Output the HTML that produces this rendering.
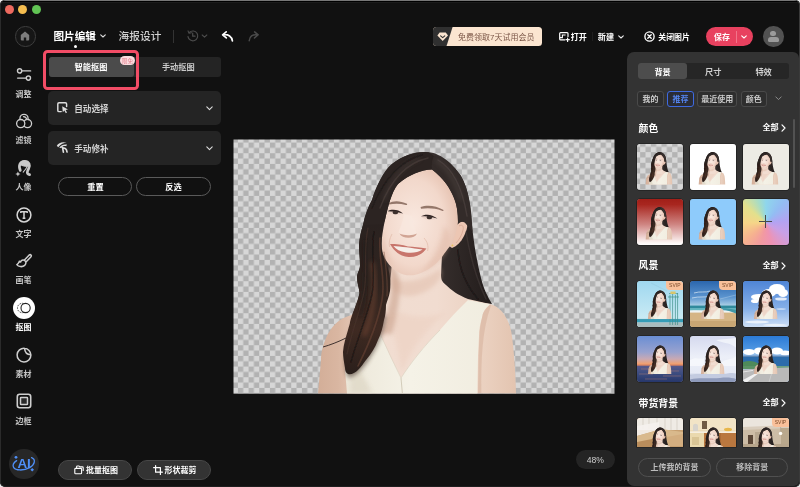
<!DOCTYPE html>
<html lang="zh-CN">
<head>
<meta charset="utf-8">
<title>图片编辑 - 智能抠图</title>
<style>
*{box-sizing:border-box;margin:0;padding:0}
html,body{width:800px;height:487px;overflow:hidden;background:#e9e9e9}
body{font-family:"Liberation Sans","Noto Sans CJK SC",sans-serif;color:#fff;position:relative;-webkit-font-smoothing:antialiased}
.win{position:absolute;left:0;top:0;width:800px;height:487px;background:#111;border-radius:5px;overflow:hidden}
.edge{position:absolute;left:0;top:0;width:800px;height:487px;border-radius:5px;box-shadow:inset 1px 0 #2b2b2b,inset -1px 0 #3a3a3a,inset 0 -1px #1e1e1e;pointer-events:none}
.abs{position:absolute}
.t{position:absolute;white-space:nowrap;line-height:1;transform:translate(-50%,calc(-50% + 0.8px))}
.tl{position:absolute;white-space:nowrap;line-height:1;transform:translate(0,calc(-50% + 0.8px))}
.b{font-weight:700}
.lbl{font-size:8px;color:#c6c6c6;font-weight:700}
svg{position:absolute;overflow:visible}
.panel{position:absolute;left:47px;width:173px;height:34.5px;background:#242424;border-radius:5px}
.pill{position:absolute;border:1px solid #5a5a5a;border-radius:10px;height:19px}
.pill2{position:absolute;border:1px solid #474747;background:#333;border-radius:10px;height:19.5px}
.chip{position:absolute;top:89.5px;height:16px;border:1px solid #4a4a4a;border-radius:3px;background:#2e2e2e}
.th{position:absolute;width:46.3px;height:46.2px;border-radius:3px;overflow:hidden;background:#888;box-shadow:0 0 0 0.6px rgba(0,0,0,.5)}
.th svg{left:0;top:0}
.svip{position:absolute;right:0;top:0;width:17px;height:9px;background:#f9c09a;border-radius:0 3px 0 4px;font-size:5px;color:#7a4a2a;text-align:center;line-height:9px;font-weight:400}
.sec{position:absolute;left:638.6px;font-size:9.9px;font-weight:700;color:#fff;white-space:nowrap;line-height:1;transform:translate(0,-50%)}
.all{position:absolute;left:762.4px;font-size:8.1px;font-weight:700;color:#fff;white-space:nowrap;line-height:1;transform:translate(0,-50%)}
</style>
</head>
<body>
<div class="win">
<!-- all coordinates inside .win are page coords minus 1 -->
<div id="root" class="abs" style="left:0;top:0;width:800px;height:487px;will-change:transform">

<div class="abs" style="left:0;top:0;width:800px;height:1px;background:#777"></div><div class="abs" style="left:0;top:1px;width:800px;height:1px;background:#000"></div><div class="abs" style="left:0;top:2px;width:800px;height:1px;background:#1b1b1b"></div>
<!-- traffic lights -->
<div class="abs" style="left:4.8px;top:4.8px;width:9.2px;height:9.2px;border-radius:50%;background:#ee6a5f"></div>
<div class="abs" style="left:18px;top:4.8px;width:9.2px;height:9.2px;border-radius:50%;background:#f5bd4f"></div>
<div class="abs" style="left:31.5px;top:4.8px;width:9.2px;height:9.2px;border-radius:50%;background:#61c454"></div>

<!-- home -->
<div class="abs" style="left:15.2px;top:26.2px;width:20.4px;height:20.4px;border-radius:50%;border:1px solid #3e3e3e;background:#161616"></div>
<svg style="left:20.4px;top:31.4px" width="10" height="10" viewBox="0 0 10 10"><path d="M5 0.6 L9.2 4 V8.6 Q9.2 9.4 8.4 9.4 H6.2 V6.4 H3.8 V9.4 H1.6 Q0.8 9.4 0.8 8.6 V4 Z" fill="#7d7d7d"/></svg>

<div class="tl b" style="left:53.5px;top:34.8px;font-size:10.6px;color:#fff">图片编辑</div>
<svg style="left:99.5px;top:33.5px" width="6" height="4" viewBox="0 0 6 4"><path d="M0.7 0.8 L3 3 L5.3 0.8" fill="none" stroke="#ddd" stroke-width="1.1" stroke-linecap="round" stroke-linejoin="round"/></svg>
<div class="abs" style="left:73.7px;top:44.6px;width:3.1px;height:3.1px;border-radius:50%;background:#fff"></div>
<div class="tl" style="left:118.6px;top:35.6px;font-size:10.7px;color:#d2d2d2;font-weight:500">海报设计</div>
<div class="abs" style="left:173.2px;top:30px;width:1px;height:13px;background:#333"></div>

<!-- history -->
<svg style="left:186px;top:29px" width="24" height="14" viewBox="186 29 24 14"><path d="M189.4 32.4 A4.9 4.9 0 1 1 188 36.6" fill="none" stroke="#4c4c4c" stroke-width="1.2" stroke-linecap="round"/><path d="M188 30.9 L189 33.2 L191.4 32.7" fill="none" stroke="#4c4c4c" stroke-width="1.1" stroke-linecap="round" stroke-linejoin="round"/><path d="M192.7 33.2 V36.2 H195" fill="none" stroke="#4c4c4c" stroke-width="1.2" stroke-linecap="round" stroke-linejoin="round"/><path d="M202.2 35 L204.5 37.2 L206.8 35" fill="none" stroke="#4c4c4c" stroke-width="1.1" stroke-linecap="round" stroke-linejoin="round"/></svg>
<!-- undo / redo -->
<svg style="left:220px;top:29px" width="16" height="14" viewBox="220 29 16 14"><path d="M226.2 31.9 L222.6 34.8 L226.3 37.9 M223 34.8 C228.6 34 231.8 36.6 232.4 40.8" fill="none" stroke="#fff" stroke-width="1.7" stroke-linecap="round" stroke-linejoin="round"/></svg>
<svg style="left:246px;top:29px" width="16" height="14" viewBox="246 29 16 14"><path d="M254.6 31.9 L258.2 34.8 L254.5 37.9 M257.8 34.8 C252.2 34 249.6 36.6 249.2 40.8" fill="none" stroke="#4a4a4a" stroke-width="1.5" stroke-linecap="round" stroke-linejoin="round"/></svg>

<!-- vip banner -->
<div class="abs" style="left:433px;top:27px;width:109px;height:19.3px;border-radius:3.5px;background:#fbe5d0;overflow:hidden">
  <svg style="left:0;top:0" width="25" height="20" viewBox="0 0 25 20"><path d="M0 0 H19.6 L13.2 20 H0 Z" fill="#303030"/></svg>
</div>
<svg style="left:436.6px;top:31.8px" width="11.4" height="9.4" viewBox="0 0 11.4 9.4"><path d="M2.6 0.4 H8.8 L11 3.4 L5.7 9 L0.4 3.4 Z" fill="#fbe5d0"/><path d="M3.6 3.8 L5.7 5.6 L7.8 3.8" fill="none" stroke="#303030" stroke-width="1.1" stroke-linecap="round" stroke-linejoin="round"/></svg>
<div class="tl" style="left:458px;top:36.7px;font-size:8px;color:#7b5647">免费领取7天试用会员</div>

<!-- open -->
<svg style="left:558.8px;top:32px" width="11" height="10" viewBox="0 0 11 10"><path d="M9 4.6 V1.6 Q9 0.7 8.1 0.7 H1.6 Q0.7 0.7 0.7 1.6 V7 Q0.7 7.9 1.6 7.9 H5.6" fill="none" stroke="#fff" stroke-width="1.2" stroke-linecap="round"/><path d="M0.9 5.6 H3.4 V3 H6.6" fill="none" stroke="#fff" stroke-width="1.1"/><path d="M8.6 6 V9.4 M6.9 7.7 H10.3" stroke="#fff" stroke-width="1.2" stroke-linecap="round"/></svg>
<div class="tl b" style="left:570.8px;top:36.8px;font-size:8px">打开</div>
<div class="abs" style="left:592px;top:32px;width:1px;height:9px;background:#1f1f1f"></div>
<div class="tl b" style="left:597.8px;top:36.8px;font-size:8.1px">新建</div>
<svg style="left:617.6px;top:35px" width="6" height="4" viewBox="0 0 6 4"><path d="M0.7 0.8 L3 3 L5.3 0.8" fill="none" stroke="#eee" stroke-width="1.1" stroke-linecap="round" stroke-linejoin="round"/></svg>

<!-- close image -->
<svg style="left:644.2px;top:31.2px" width="11" height="11" viewBox="0 0 11 11"><circle cx="5.5" cy="5.5" r="4.6" fill="none" stroke="#fff" stroke-width="1.35"/><path d="M3.8 3.8 L7.2 7.2 M7.2 3.8 L3.8 7.2" stroke="#fff" stroke-width="1.35" stroke-linecap="round"/></svg>
<div class="tl b" style="left:658.3px;top:36.8px;font-size:7.9px">关闭图片</div>

<!-- save -->
<div class="abs" style="left:705.5px;top:27.2px;width:47.5px;height:19px;border-radius:9.5px;background:#e8415f"></div>
<div class="tl b" style="left:714px;top:36.8px;font-size:7.9px">保存</div>
<div class="abs" style="left:736.3px;top:31px;width:1px;height:11.5px;background:#f58a9c;opacity:.7"></div>
<svg style="left:740.6px;top:35px" width="6" height="4" viewBox="0 0 6 4"><path d="M0.7 0.8 L3 3 L5.3 0.8" fill="none" stroke="#fff" stroke-width="1.1" stroke-linecap="round" stroke-linejoin="round"/></svg>

<!-- avatar -->
<div class="abs" style="left:763.2px;top:26.4px;width:20.4px;height:20.4px;border-radius:50%;background:#525252;overflow:hidden">
  <div class="abs" style="left:7.3px;top:4.2px;width:5.8px;height:5.8px;border-radius:50%;background:#9a9a9a"></div>
  <div class="abs" style="left:4.4px;top:11px;width:11.6px;height:5px;border-radius:3px 3px 1.5px 1.5px;background:#9a9a9a"></div>
</div>

<!-- adjust -->
<svg style="left:16px;top:67px" width="17" height="15" viewBox="0 0 17 15"><circle cx="3.6" cy="3.9" r="2.1" fill="none" stroke="#cfcfcf" stroke-width="1.4"/><path d="M6 3.9 H14.6" stroke="#cfcfcf" stroke-width="1.4" stroke-linecap="round"/><circle cx="12.4" cy="11.1" r="2.1" fill="none" stroke="#cfcfcf" stroke-width="1.4"/><path d="M1.6 11.1 H10" stroke="#cfcfcf" stroke-width="1.4" stroke-linecap="round"/></svg>
<div class="t lbl" style="left:23.6px;top:93.5px">调整</div>
<!-- filter -->
<svg style="left:14px;top:112px" width="20" height="18" viewBox="14 112 20 18"><circle cx="24" cy="118.4" r="4.1" fill="none" stroke="#cfcfcf" stroke-width="1.3"/><circle cx="27.5" cy="123.6" r="4.1" fill="#111" stroke="#cfcfcf" stroke-width="1.3"/><path d="M26.2 119.6 C27.6 120.6 28.4 122 28.6 123.6" fill="none" stroke="#111" stroke-width="1.2"/><circle cx="20.7" cy="123.6" r="4.1" fill="#111" stroke="#cfcfcf" stroke-width="1.3"/><path d="M23.4 116.6 C25.4 116.8 26.6 118 26.8 119.8" fill="none" stroke="#cfcfcf" stroke-width="1.1" stroke-linecap="round"/></svg>
<div class="t lbl" style="left:23.6px;top:140.3px">滤镜</div>
<!-- portrait -->
<svg style="left:14px;top:158px" width="20" height="20" viewBox="14 158 20 20"><path d="M20.3 170.4 C18.2 165.6 20 161.3 24.6 161.3 C29.2 161.3 30.6 165.6 28.6 168.8 C27 171.4 26.4 174.2 29.6 174.7" fill="none" stroke="#c9c9c9" stroke-width="2.7" stroke-linecap="round" stroke-linejoin="round"/><path d="M20.4 164.6 C22.6 166 25.4 166.4 27.6 166 C26.4 168.2 24.8 170.4 23.2 172.2" fill="none" stroke="#c9c9c9" stroke-width="1.1" stroke-linecap="round" stroke-linejoin="round"/><path d="M19.4 166 C19 162 21.6 160.4 24.6 160.4 C28 160.4 30.4 162.6 29.8 166.6 L27.6 166.2 C25 166.6 22.4 166 20.6 164.8 Z" fill="#c9c9c9"/><path d="M17.9 171.4 L18.7 173.2 L20.5 174 L18.7 174.8 L17.9 176.6 L17.1 174.8 L15.3 174 L17.1 173.2 Z" fill="#c9c9c9"/></svg>
<div class="t lbl" style="left:23.6px;top:187.3px">人像</div>
<!-- text -->
<svg style="left:16px;top:206.5px" width="16" height="16" viewBox="0 0 16 16"><circle cx="8" cy="8" r="6.9" fill="none" stroke="#d6d6d6" stroke-width="1.5"/><path d="M4.8 6 V4.8 H11.2 V6 M8 4.8 V11.2 M6.6 11.3 H9.4" fill="none" stroke="#d6d6d6" stroke-width="1.5" stroke-linejoin="round"/></svg>
<div class="t lbl" style="left:23.6px;top:233.7px">文字</div>
<!-- brush -->
<svg style="left:16px;top:252.5px" width="16" height="16" viewBox="0 0 16 16"><path d="M8.2 7.2 L13 2.2 Q14.2 1.2 15 2 Q15.8 2.9 14.8 4 L10 9" fill="none" stroke="#cfcfcf" stroke-width="1.5" stroke-linejoin="round"/><path d="M3.4 8.2 C2.6 10 1.8 11.2 0.8 11.6 C2.4 13.8 6.4 14.4 8.6 12.4 C10.2 10.8 10.2 9 9.2 8 C8 6.8 6.2 6.8 5 8 C5 9.2 4.2 9.4 3.4 8.2 Z" fill="none" stroke="#cfcfcf" stroke-width="1.5" stroke-linejoin="round"/></svg>
<div class="t lbl" style="left:23.6px;top:280.4px">画笔</div>
<!-- cutout (active) -->
<div class="abs" style="left:12.6px;top:296.6px;width:22.8px;height:22.8px;border-radius:50%;background:#fff"></div>
<svg style="left:15px;top:299px" width="18" height="18" viewBox="0 0 18 18"><circle cx="7.2" cy="9" r="4.7" fill="none" stroke="#333" stroke-width="0.9" stroke-dasharray="1.6 1.1"/><circle cx="10.6" cy="9" r="4.6" fill="#fff" stroke="#222" stroke-width="1.1"/></svg>
<div class="t b" style="left:23.6px;top:327.4px;font-size:8px;color:#fff">抠图</div>
<!-- sticker -->
<svg style="left:16px;top:346.6px" width="16" height="16" viewBox="0 0 16 16"><path d="M8.6 1.2 A6.9 6.9 0 1 0 14.9 8 C14.9 4.8 12 1.4 8.6 1.2 Z" fill="none" stroke="#cfcfcf" stroke-width="1.5" stroke-linejoin="round"/><path d="M8.6 1.4 C8.8 4.8 11 7.6 14.8 7.8" fill="none" stroke="#cfcfcf" stroke-width="1.5"/></svg>
<div class="t lbl" style="left:23.6px;top:373.9px">素材</div>
<!-- frame -->
<svg style="left:16px;top:393.4px" width="16" height="16" viewBox="0 0 16 16"><rect x="1.3" y="1.3" width="13.4" height="13.4" rx="2.4" fill="none" stroke="#cfcfcf" stroke-width="1.6"/><rect x="4.5" y="4.5" width="7" height="7" rx="0.6" fill="#2a2a2a" stroke="#cfcfcf" stroke-width="1.5"/></svg>
<div class="t lbl" style="left:23.6px;top:420.5px">边框</div>
<!-- AI -->
<div class="abs" style="left:9.3px;top:449.2px;width:29.4px;height:29.4px;border-radius:50%;background:#272727"></div>
<svg style="left:9px;top:449px" width="30" height="30" viewBox="9 449 30 30"><text x="17.4" y="467.6" font-family="Liberation Sans, sans-serif" font-size="13.6" fill="#4f8ff7" font-weight="700" textLength="13.4" lengthAdjust="spacingAndGlyphs">AI</text><path d="M31.6 457.6 C36 459.4 35 464.6 29.6 467.6 C23.6 471 15.4 470.6 13.6 467.4 C12.4 465.2 14 462.4 16.6 460.6" fill="none" stroke="#4f8ff7" stroke-width="1.3" stroke-linecap="round"/><circle cx="16" cy="457.3" r="1.4" fill="#4f8ff7"/><path d="M32.2 468 L34 469.8 L32.2 471.6 L30.4 469.8 Z" fill="#4f8ff7"/></svg>

<!-- tabs -->
<div class="abs" style="left:48.5px;top:56.5px;width:172.7px;height:20px;border-radius:3px;background:#242424"></div>
<div class="abs" style="left:48.5px;top:56.5px;width:85.5px;height:20px;border-radius:3px;background:#4b4b4b"></div>
<div class="t b" style="left:91px;top:67px;font-size:8.2px">智能抠图</div>
<div class="t" style="left:178.3px;top:67px;font-size:8.2px;color:#c8c8c8;font-weight:700">手动抠图</div>
<div class="abs" style="left:119.9px;top:56.1px;width:15px;height:9.2px;border-radius:4.6px;background:#fbdcdf"></div>
<div class="t" style="left:127.4px;top:60.6px;font-size:5.6px;color:#e27f8c;font-weight:400">限免</div>
<!-- highlight -->
<div class="abs" style="left:42.6px;top:49.7px;width:96.5px;height:40.1px;border:3px solid #f24d66;border-radius:4.5px"></div>

<!-- panel 1 -->
<div class="panel" style="left:48px;top:90.7px"></div>
<svg style="left:56.6px;top:102.2px" width="12" height="12" viewBox="0 0 12 12"><path d="M9.6 4.4 V2 Q9.6 0.8 8.4 0.8 H2 Q0.8 0.8 0.8 2 V8.4 Q0.8 9.6 2 9.6 H4.2" fill="none" stroke="#ddd" stroke-width="1.45" stroke-linecap="round"/><path d="M5.2 4.2 L11 7.4 L8.6 8 L10 10.6 L8.8 11.2 L7.4 8.6 L5.8 10.2 Z" fill="#ddd"/></svg>
<div class="tl" style="left:74.2px;top:108.3px;font-size:8.6px;color:#d2d2d2;font-weight:700">自动选择</div>
<svg style="left:206.2px;top:106.2px" width="7" height="5" viewBox="0 0 7 5"><path d="M0.8 0.9 L3.5 3.6 L6.2 0.9" fill="none" stroke="#ddd" stroke-width="1.1" stroke-linecap="round" stroke-linejoin="round"/></svg>
<!-- panel 2 -->
<div class="panel" style="left:48px;top:130.8px"></div>
<svg style="left:55.6px;top:141.2px" width="13" height="12" viewBox="0 0 13 12"><path d="M0.8 4.8 C2.6 1.6 6.6 0.4 10.6 1.8 C8 2 4.4 3 2.2 6.2 Z" fill="#ddd"/><path d="M3.2 6.8 C5.4 3.6 8.4 3 11 3.6 L10.2 5.2 C8.2 4.8 6.4 5.4 5.4 7 Z" fill="#ddd"/><path d="M6.6 6.6 L7.4 11.2 M6.8 7.4 C8.6 6.6 10.6 7.8 11 11" fill="none" stroke="#ddd" stroke-width="1.7" stroke-linecap="round"/></svg>
<div class="tl" style="left:74.2px;top:147.8px;font-size:8.6px;color:#d2d2d2;font-weight:700">手动修补</div>
<svg style="left:206.2px;top:146px" width="7" height="5" viewBox="0 0 7 5"><path d="M0.8 0.9 L3.5 3.6 L6.2 0.9" fill="none" stroke="#ddd" stroke-width="1.1" stroke-linecap="round" stroke-linejoin="round"/></svg>

<!-- buttons -->
<div class="pill" style="left:58.2px;top:177.2px;width:74.3px"></div>
<div class="t b" style="left:95.4px;top:187px;font-size:8.2px">重置</div>
<div class="pill" style="left:136.2px;top:177.2px;width:74.5px"></div>
<div class="t b" style="left:173.5px;top:187px;font-size:8.2px">反选</div>

<svg width="0" height="0" style="left:0;top:0">
<defs>
  <pattern id="chk" x="237.9" y="142.56" width="10.667" height="10.667" patternUnits="userSpaceOnUse">
    <rect width="10.667" height="10.667" fill="#d7d7d7"/>
    <rect width="5.333" height="5.333" fill="#b2b2b2"/>
    <rect x="5.333" y="5.333" width="5.334" height="5.334" fill="#b2b2b2"/>
  </pattern>
  <linearGradient id="gHairF" x1="0" y1="0" x2="0" y2="1">
    <stop offset="0" stop-color="#2a2220"/><stop offset="0.4" stop-color="#30241f"/><stop offset="0.7" stop-color="#3f2a22"/><stop offset="1" stop-color="#2a1f1b"/>
  </linearGradient>
  <linearGradient id="gHairB" x1="0" y1="0" x2="1" y2="0">
    <stop offset="0" stop-color="#2d2523"/><stop offset="0.55" stop-color="#3a3230"/><stop offset="1" stop-color="#221c1b"/>
  </linearGradient>
  <radialGradient id="gFace" cx="0.42" cy="0.5" r="0.62">
    <stop offset="0" stop-color="#f9e8df"/><stop offset="0.65" stop-color="#f2d8cb"/><stop offset="1" stop-color="#e4bfad"/>
  </radialGradient>
  <linearGradient id="gBody" x1="0" y1="0" x2="1" y2="0">
    <stop offset="0" stop-color="#d3ae98"/><stop offset="0.1" stop-color="#d9b6a1"/><stop offset="0.2" stop-color="#e6c9b8"/><stop offset="0.32" stop-color="#f1ddd1"/><stop offset="0.6" stop-color="#f1dcd0"/><stop offset="0.85" stop-color="#ead0bf"/><stop offset="1" stop-color="#e3c4b0"/>
  </linearGradient>
  <linearGradient id="gDress" x1="0" y1="0" x2="1" y2="0">
    <stop offset="0" stop-color="#ece7d9"/><stop offset="0.45" stop-color="#f5f2e7"/><stop offset="1" stop-color="#f1ede0"/>
  </linearGradient>
  <filter id="bl1" x="-20%" y="-20%" width="140%" height="140%"><feGaussianBlur stdDeviation="0.6"/></filter>
  <filter id="bl2" x="-30%" y="-30%" width="160%" height="160%"><feGaussianBlur stdDeviation="2.2"/></filter>
  <!-- person drawn in page coordinates; canvas origin = (233.5,139.5) -->
  <g id="person" transform="translate(-233.5,-139.5)">
    <!-- back hair -->
    <path d="M424 152 C438 151 452 162 461 176 C469 190 471 208 472 225 C474 245 477 262 481 278 C484 290 488 297 492 304 L468 301 L440 292 L400 292 L372 300 L350 322 C352 314 358 302 359.5 293 C359 287 357 283 357 277 C357.5 272 360 270 360 265 C360 258 359 252 359 245 C359.5 238 361 231 363 225 C365 215 368 207 372 200 C374 192 377 186 380 180 C383 174 387 168 392 164 C397 160 402 157 408 155 C413 153 419 152 424 152 Z" fill="url(#gHairB)"/>
    <!-- body skin -->
    <path d="M392 262 L390 285 C380 300 362 312 346 317 C338 320 331 327 326 338 C322 348 321 354 321 360 L318 393.5 H516 L515.4 378 C515 366 514 355 513 345 C512 335 511 327 507.5 320.5 C505 315 502 311 499 309 C496 306 493 305 490 304 L468 299 C458 295 451 290 446 285 C442 282 441 279 441 275 L442 255 Z" fill="url(#gBody)"/>
    <!-- chest / neck shading -->
    <path d="M390 276 C398 284 420 284 441 268 L441 276 C436 288 420 296 408 296 C398 296 392 290 390 284 Z" fill="#e0bca9" opacity="0.5" filter="url(#bl2)"/>
    <path d="M384 318 C392 322 396 340 402 372 C410 350 424 332 446 312 C430 318 412 318 400 312 Z" fill="#ebcdbd" opacity="0.45" filter="url(#bl2)"/>
    <path d="M389 268 C392 282 392 296 388 308 C386 316 384 324 380 334 L392 334 C396 318 400 300 400 284 C399 276 396 270 392 266 Z" fill="#caa28d" opacity="0.6" filter="url(#bl2)"/>
    <!-- dress -->
    <path d="M468 300 L490 304.3 C485 309 483 312 482.4 316 C480 324 479 330 479 336 L478 356 L477.4 393.5 H347 L345 370 L348 340 L356 314 L364 311 L380 334 C384 342 387 349 390 356 C394 364 398 371 401 378 C407 369 413 360 420 352 C426 344 433 337 440 330 C446 323 452 316 458 310 Z" fill="url(#gDress)"/>
    <path d="M401 378 L402.4 393.5" stroke="#cfc7b4" stroke-width="0.9" fill="none"/>
    <path d="M380 334 C386 346 394 364 401 378 C410 364 424 346 440 330" stroke="#d8cfbd" stroke-width="0.7" fill="none" opacity="0.8"/>
    <path d="M352 352 C360 372 368 384 372 393 L350 393 Z" fill="#ddd6c4" opacity="0.7" filter="url(#bl2)"/>
    <!-- right shoulder shade -->
    <path d="M490 304.5 C485 309 483 313 482.4 316 C480.5 324 479.5 330 479.4 336 L478.6 356 L478 393 L481.4 393 C481 360 482 330 491 305.4 Z" fill="#d6b19c" opacity="0.55" filter="url(#bl1)"/>
    <!-- ear -->
    <path d="M455 228 C458 222 463 220 466 222 C468.5 224 467 230 464 236 C461 242 457 246 452 248 L449 246 Z" fill="#ecc6b3"/>
    <path d="M459 226 C462 224 464 226 463 230 C462 235 459 240 456 243" stroke="#cf9f8b" stroke-width="0.8" fill="none" opacity="0.8"/>
    <circle cx="452.4" cy="245.4" r="0.9" fill="#e6c65a"/>
    <!-- face -->
    <path d="M432 169.5 C421 170 410 174 398 184 C391 193 388 207 385 220 C382.5 232 380.5 243 382.5 252 C385 261 391 268 398 272 C404 276 413 276.5 421 273 C431 269 439 262 444 254 C447 250 449 247 451 245 C455 238 457 230 458 222 C458 213 457 205 454 198 C450 188 444 179 432 169.5 Z" fill="url(#gFace)"/>
    <!-- cheek / jaw shading -->
    <path d="M444 226 C452 232 452 246 442 258 C436 266 428 270 420 273 C432 262 440 246 444 226 Z" fill="#dcb09c" opacity="0.35" filter="url(#bl2)"/>
    <path d="M384 226 C383 240 385 254 394 266 C388 262 384 257 382.5 251 C381 244 382.5 234 384 226 Z" fill="#dcb09c" opacity="0.4" filter="url(#bl2)"/>
    <!-- brows -->
    <path d="M388.6 203.4 C393 200.4 400 200.4 407 203.8 C407.4 204.6 407 205.2 406 205 C400 203.4 394 203.4 389 204.6 Z" fill="#7d5e51" opacity="0.8" filter="url(#bl1)"/>
    <path d="M420.6 207 C427 204.6 436 205.4 443.6 210 C443.6 211 443 211.2 442 210.8 C435 208.2 428 207.8 421 208.8 Z" fill="#7d5e51" opacity="0.8" filter="url(#bl1)"/>
    <!-- eyes -->
    <path d="M387.6 211.4 C391 208.6 398 208.8 403 213.4 C398 215.6 391 215 387.6 211.4 Z" fill="#e9d2c8" opacity="0.9"/>
    <path d="M421 216.4 C425 213 432 213.6 437.4 218.6 C431 221 425 220 421 216.4 Z" fill="#e9d2c8" opacity="0.9"/>
    <path d="M387.6 211.2 C391.6 209 398 209.4 403 213.4 C397.6 211.8 392 211.4 387.6 211.2 Z" fill="#2e2220" filter="url(#bl1)"/>
    <path d="M421 216.2 C425.6 213.6 432 214.2 437.4 218.6 C431.6 216.8 426 216.2 421 216.2 Z" fill="#2e2220" filter="url(#bl1)"/>
    <ellipse cx="395.4" cy="212.4" rx="2.7" ry="1.9" fill="#3d302d"/>
    <ellipse cx="429.4" cy="217.4" rx="2.7" ry="1.9" fill="#3d302d"/>
    <!-- nose -->
    <path d="M404 214 C403 222 400 228 398.6 232 C400 236 404 237.6 408 237.8 C412 238 416 236.6 417 233.4 C415 229 413 224 412 216 Z" fill="#f9e9e0" opacity="0.7" filter="url(#bl1)"/>
    <path d="M399.4 233.6 C401 236.6 404.4 237.6 408 237.8 C412 238 415.6 236.8 417 233.6 C414 235 411 235.4 408 235.2 C405 235.2 402 234.8 399.4 233.6 Z" fill="#c48f7c" opacity="0.75" filter="url(#bl1)"/>
    <!-- smile folds -->
    <path d="M392 234 C389.4 239 388.6 243 389.6 247" stroke="#dbb09d" stroke-width="0.9" fill="none" opacity="0.6" filter="url(#bl1)"/>
    <path d="M424 238 C427.6 242 428.6 246 427.6 251" stroke="#dbb09d" stroke-width="0.9" fill="none" opacity="0.6" filter="url(#bl1)"/>
    <!-- mouth -->
    <path d="M390 244 C396 244 402 244.6 408 246.6 C414 246.8 420 247.4 426.4 248.6 C423 254 416 257.4 408.6 257 C400 256.4 394 251 390 244 Z" fill="#c8766c" filter="url(#bl1)"/>
    <path d="M393.4 246 C400 246.4 412 248 422.6 249.6 C418 252.6 412 253.2 406 252.4 C400 251.6 396 249.4 393.4 246 Z" fill="#f6efe9"/>
    <!-- front hair: top cap over forehead edges -->
    <path d="M432 169.5 C421 170 410 174 398 184 C391 193 388 207 385 220 L383 225 L363 225 C365 215 368 207 372 200 C376 188 383 172 392 164 C402 156 414 152 424 152 C428 152 431 153.5 434 156 C432 160 431.5 165 432 169.5 Z" fill="#2c2422"/>
    <path d="M434 156 C442 157 452 163 461 176 C469 190 471 208 472 225 L472.6 232 L466 224 C464 221 460 221 458 224 C458 213 457 205 454 198 C450 188 444 179 432 169.5 C431.5 165 432 160 434 156 Z" fill="#332b29"/>
    <path d="M436 160 C446 166 456 180 461 200" stroke="#574d4a" stroke-width="3" fill="none" opacity="0.5" filter="url(#bl2)"/>
    <path d="M420 158 C406 162 392 176 384 200" stroke="#4c403c" stroke-width="3" fill="none" opacity="0.55" filter="url(#bl2)"/>
    <path d="M360 300 C356 316 350 330 347 346 C344 360 344 372 349 378 C356 376 364 368 370 358 C378 346 384 332 386 316 Z" fill="#3a2a24" opacity="0.55" filter="url(#bl2)"/>
    <!-- front left hair flowing down -->
    <path d="M363 225 L383.4 224 C382 232 380.6 243 382 251 C383 257 385.4 262 388 268 C390 275 391 283 390 291 C389 297 387 301 386 305 C386 311 385.4 316 384 320 C382.6 328 381 334 378 340 C375 348 371 354 366 360 C363 364 361 367 358 370 C355 373 351 375 348 374 C346 373 345 371 345 368 C344 362 343 357 343 352 C343.5 344 346 337 348 330 C349 326 350 324 350 322 C352 314 358 302 359.5 293 C359 287 357 283 357 277 C357.5 272 360 270 360 265 C360 258 359 252 359 245 C359.5 238 361 231 363 225 Z" fill="url(#gHairF)"/>
    <path d="M372 262 C376 282 376 306 364 336" stroke="#7a4a36" stroke-width="4" fill="none" opacity="0.55" filter="url(#bl2)"/>
    <path d="M366 240 C364 262 368 286 360 316" stroke="#1f1816" stroke-width="3" fill="none" opacity="0.6" filter="url(#bl2)"/>
    <!-- hair strands -->
    <g fill="none" stroke-linecap="round" filter="url(#bl1)">
      <path d="M380 238 C378 258 386 278 382 300 C378 322 370 342 358 366" stroke="#6d4635" stroke-width="1.6" opacity="0.55"/>
      <path d="M374 232 C370 252 376 274 372 294 C368 314 358 336 351 362" stroke="#171110" stroke-width="1.4" opacity="0.6"/>
      <path d="M368 228 C363 250 368 272 364 292 C360 312 352 330 347 354" stroke="#4a342c" stroke-width="1.2" opacity="0.6"/>
      <path d="M384 252 C386 266 388 280 387 296" stroke="#7a5240" stroke-width="1.2" opacity="0.5"/>
      <path d="M428 158 C410 162 392 176 380 208" stroke="#514440" stroke-width="1.4" opacity="0.55"/>
      <path d="M422 155 C402 160 384 178 372 208" stroke="#1c1514" stroke-width="1.4" opacity="0.55"/>
      <path d="M438 160 C452 168 462 186 467 216" stroke="#554a47" stroke-width="1.4" opacity="0.5"/>
      <path d="M466 232 C470 256 475 276 486 299" stroke="#4a403d" stroke-width="1.4" opacity="0.5"/>
      <path d="M458 250 C459 268 465 284 478 299" stroke="#151010" stroke-width="1.6" opacity="0.55"/>
    </g>
    <!-- stray hair -->
    <path d="M346 338 C338 342 330 345 323 347" stroke="#2c2321" stroke-width="0.9" fill="none"/>
  </g>
</defs>
</svg>
<!-- main canvas -->
<svg style="left:233px;top:139px;overflow:hidden" width="383" height="256" viewBox="233 139 383 256">
  <defs><clipPath id="cvclip"><rect x="233.5" y="139.5" width="381" height="254.2"/></clipPath></defs>
  <rect x="233.5" y="139.5" width="381" height="254.2" fill="url(#chk)"/>
  <g clip-path="url(#cvclip)"><use href="#person" transform="translate(233.5,139.5)"/></g>
</svg>

<div class="abs" style="left:626.6px;top:52px;width:172.4px;height:434px;background:#333;border-radius:7px 6px 5px 7px"></div>
<div class="abs" style="left:637.5px;top:63.2px;width:151.3px;height:16px;border-radius:3px;background:#262626"></div>
<div class="abs" style="left:637.5px;top:63.2px;width:49.6px;height:16px;border-radius:3px;background:#4d4d4d"></div>
<div class="t b" style="left:662.6px;top:71.5px;font-size:8.2px">背景</div>
<div class="t" style="left:713.2px;top:71.5px;font-size:8.2px;color:#d0d0d0;font-weight:700">尺寸</div>
<div class="t" style="left:763.6px;top:71.5px;font-size:8.2px;color:#d0d0d0;font-weight:700">特效</div>
<div class="chip" style="left:637.2px;top:90.5px;width:26.4px"></div>
<div class="t" style="left:650.4000000000001px;top:98.8px;font-size:8px;color:#cacaca;font-weight:700">我的</div>
<div class="chip" style="left:667px;top:90.5px;width:27px;border-color:#3e6ae1;background:#2a2c36"></div>
<div class="t" style="left:680.5px;top:98.8px;font-size:8px;color:#5585f0;font-weight:700">推荐</div>
<div class="chip" style="left:697px;top:90.5px;width:40.4px"></div>
<div class="t" style="left:717.2px;top:98.8px;font-size:8px;color:#cacaca;font-weight:700">最近使用</div>
<div class="chip" style="left:740.5px;top:90.5px;width:26.6px"></div>
<div class="t" style="left:753.8px;top:98.8px;font-size:8px;color:#cacaca;font-weight:700">颜色</div>
<svg style="left:774.6px;top:96.4px" width="7" height="5" viewBox="0 0 7 5"><path d="M0.8 0.9 L3.5 3.6 L6.2 0.9" fill="none" stroke="#8a8a8a" stroke-width="1" stroke-linecap="round" stroke-linejoin="round"/></svg>
<div class="abs" style="left:792.8px;top:119px;width:2.4px;height:69px;border-radius:1.2px;background:#525252"></div>
<div class="sec" style="top:128.5px">颜色</div>
<div class="all" style="top:128.29999999999998px">全部</div>
<svg style="left:780.6px;top:124.0px" width="5" height="8" viewBox="0 0 5 8"><path d="M1 0.9 L4 4 L1 7.1" fill="none" stroke="#fff" stroke-width="1.2" stroke-linecap="round" stroke-linejoin="round"/></svg>
<div class="sec" style="top:266.09999999999997px">风景</div>
<div class="all" style="top:265.9px">全部</div>
<svg style="left:780.6px;top:261.59999999999997px" width="5" height="8" viewBox="0 0 5 8"><path d="M1 0.9 L4 4 L1 7.1" fill="none" stroke="#fff" stroke-width="1.2" stroke-linecap="round" stroke-linejoin="round"/></svg>
<div class="sec" style="top:403.59999999999997px">带货背景</div>
<div class="all" style="top:403.4px">全部</div>
<svg style="left:780.6px;top:399.09999999999997px" width="5" height="8" viewBox="0 0 5 8"><path d="M1 0.9 L4 4 L1 7.1" fill="none" stroke="#fff" stroke-width="1.2" stroke-linecap="round" stroke-linejoin="round"/></svg>
<div class="th" style="left:637.0px;top:143.6px;height:46.2px;"><svg width="46.3" height="46.2" viewBox="0 0 46.3 46.2"><defs><pattern id="chk2" x="3.15" y="-2.53" width="10.667" height="10.667" patternUnits="userSpaceOnUse"><rect width="10.667" height="10.667" fill="#d7d7d7"/><rect width="5.333" height="5.333" fill="#b4b4b4"/><rect x="5.333" y="5.333" width="5.334" height="5.334" fill="#b4b4b4"/></pattern></defs><rect width="46.3" height="46.2" fill="url(#chk2)"/><use href="#person" transform="translate(-2.65,6.4) scale(0.134)"/></svg></div>
<div class="th" style="left:689.9px;top:143.6px;height:46.2px;"><svg width="46.3" height="46.2" viewBox="0 0 46.3 46.2"><rect width="46.3" height="46.2" fill="#fff"/><use href="#person" transform="translate(-2.65,6.4) scale(0.134)"/></svg></div>
<div class="th" style="left:742.7px;top:143.6px;height:46.2px;"><svg width="46.3" height="46.2" viewBox="0 0 46.3 46.2"><rect width="46.3" height="46.2" fill="#edebe4"/><use href="#person" transform="translate(-2.65,6.4) scale(0.134)"/></svg></div>
<div class="th" style="left:637.0px;top:198.7px;height:46.2px;"><svg width="46.3" height="46.2" viewBox="0 0 46.3 46.2"><defs><linearGradient id="gRed" x1="0" y1="0" x2="0" y2="1"><stop offset="0" stop-color="#a11f18"/><stop offset="0.12" stop-color="#a8261f"/><stop offset="0.55" stop-color="#cf8582"/><stop offset="0.95" stop-color="#fdf7f6"/><stop offset="1" stop-color="#fff"/></linearGradient></defs><rect width="46.3" height="46.2" fill="url(#gRed)"/><use href="#person" transform="translate(-2.65,6.4) scale(0.134)"/></svg></div>
<div class="th" style="left:689.9px;top:198.7px;height:46.2px;"><svg width="46.3" height="46.2" viewBox="0 0 46.3 46.2"><rect width="46.3" height="46.2" fill="#8ecbfb"/><use href="#person" transform="translate(-2.65,6.4) scale(0.134)"/></svg></div>
<div class="th" style="left:742.7px;top:198.7px;background:conic-gradient(from 0deg at 50% 52%,#8fd6ec 0deg,#93bdf3 40deg,#b3a3f2 85deg,#c9a0e6 120deg,#ee93b3 165deg,#f29aa0 195deg,#f6b38f 230deg,#f6d588 270deg,#e3e08c 310deg,#a9dcc4 340deg,#8fd6ec 360deg)"><div style="position:absolute;left:16.4px;top:22.6px;width:13.4px;height:1.1px;background:#4a4a4a"></div><div style="position:absolute;left:22.6px;top:16.4px;width:1.1px;height:13.4px;background:#4a4a4a"></div></div>
<div class="th" style="left:637.0px;top:280.8px;height:46.2px;"><svg width="46.3" height="46.2" viewBox="0 0 46.3 46.2"><defs><linearGradient id="l1" x1="0" y1="0" x2="0" y2="1"><stop offset="0" stop-color="#9fd8ef"/><stop offset="0.8" stop-color="#c9eaf4"/></linearGradient></defs>
<rect width="46.3" height="46.2" fill="url(#l1)"/>
<rect y="38.2" width="46.3" height="3.4" fill="#3aa7c2"/><rect y="41.4" width="46.3" height="5" fill="#a9bdbf"/>
<path d="M0 38.4 H46.3 M0 40 H46.3" stroke="#2a7f98" stroke-width="0.5"/>
<path d="M33 14 V44 M35.6 12 V44 M38.4 14 V44 M40.6 12 V44 M31 16 H42 M32 12.6 H41" stroke="#3f8f86" stroke-width="0.7" fill="none"/><path d="M33.4 10.6 H38.6 V13 H33.4 Z" fill="#d9c56a"/>
<path d="M14 2 L30 10" stroke="#8ec4d8" stroke-width="0.4"/><use href="#person" transform="translate(1.0,8.1) scale(0.118)"/></svg><div class="svip">SVIP</div></div>
<div class="th" style="left:689.9px;top:280.8px;height:46.2px;"><svg width="46.3" height="46.2" viewBox="0 0 46.3 46.2"><defs><linearGradient id="l2" x1="0" y1="0" x2="0" y2="1"><stop offset="0" stop-color="#2b66ad"/><stop offset="0.35" stop-color="#5b94cf"/><stop offset="0.52" stop-color="#a5cbe4"/></linearGradient></defs>
<rect width="46.3" height="46.2" fill="url(#l2)"/>
<path d="M4 12 C10 10 16 12 20 10 M2 17 C10 15 14 17 22 15" stroke="#dbe9f5" stroke-width="1" fill="none" opacity="0.7"/><path d="M30 18 L46 14" stroke="#cfe0ef" stroke-width="0.5" opacity="0.7"/>
<rect y="24.6" width="46.3" height="3" fill="#2f8a9c"/><rect y="27.2" width="46.3" height="2.2" fill="#64b7bf"/>
<path d="M0 29.6 C10 28.6 20 30.4 30 29.6 C36 29 42 30.2 46.3 31.4 V33 H0 Z" fill="#eef3f1"/>
<rect y="31.6" width="46.3" height="15" fill="#d5b585"/><rect y="40" width="46.3" height="7" fill="#c9a674"/>
<path d="M26 27.6 C34 28.2 40 30 46.3 32.6 V29 C40 27.4 32 26.8 26 27.6 Z" fill="#3f97a6"/><use href="#person" transform="translate(1.0,8.1) scale(0.118)"/></svg><div class="svip">SVIP</div></div>
<div class="th" style="left:742.7px;top:280.8px;height:46.2px;"><svg width="46.3" height="46.2" viewBox="0 0 46.3 46.2"><defs><linearGradient id="l3" x1="0" y1="0" x2="0" y2="1"><stop offset="0" stop-color="#4f85d6"/><stop offset="0.6" stop-color="#86b0e8"/><stop offset="1" stop-color="#cfe0f6"/></linearGradient><filter id="cb" x="-20%" y="-20%" width="140%" height="140%"><feGaussianBlur stdDeviation="0.7"/></filter></defs>
<rect width="46.3" height="46.2" fill="url(#l3)"/>
<g filter="url(#cb)" fill="#fff"><ellipse cx="34" cy="8" rx="8" ry="5"/><ellipse cx="26" cy="12" rx="7" ry="4"/><ellipse cx="40" cy="12" rx="5" ry="4"/><ellipse cx="16" cy="16" rx="8" ry="3"/><ellipse cx="12" cy="20" rx="4" ry="2"/><ellipse cx="38" cy="18" rx="6" ry="1.6" opacity="0.8"/><ellipse cx="38" cy="28" rx="5" ry="0.8" opacity="0.6"/><ellipse cx="14" cy="41" rx="12" ry="1.4" opacity="0.7"/><ellipse cx="32" cy="44" rx="12" ry="1.2" opacity="0.6"/></g><use href="#person" transform="translate(1.0,8.1) scale(0.118)"/></svg></div>
<div class="th" style="left:637.0px;top:336.0px;height:46.2px;"><svg width="46.3" height="46.2" viewBox="0 0 46.3 46.2"><defs><linearGradient id="l4" x1="0" y1="0" x2="0" y2="1"><stop offset="0" stop-color="#6a8ed4"/><stop offset="0.35" stop-color="#98a2cf"/><stop offset="0.5" stop-color="#c9a9b3"/><stop offset="0.6" stop-color="#f0a071"/><stop offset="0.63" stop-color="#d98260"/><stop offset="0.66" stop-color="#55588a"/><stop offset="0.8" stop-color="#3d4d80"/><stop offset="1" stop-color="#26366a"/></linearGradient></defs>
<rect width="46.3" height="46.2" fill="url(#l4)"/>
<path d="M4 33 H20 M24 35 H42 M2 38 H16 M26 40 H44 M8 43 H30" stroke="#c98a72" stroke-width="0.7" opacity="0.55"/><use href="#person" transform="translate(1.0,8.1) scale(0.118)"/></svg></div>
<div class="th" style="left:689.9px;top:336.0px;height:46.2px;"><svg width="46.3" height="46.2" viewBox="0 0 46.3 46.2"><defs><linearGradient id="l5" x1="0" y1="0" x2="0" y2="1"><stop offset="0" stop-color="#d5d9ef"/><stop offset="0.45" stop-color="#eceff8"/><stop offset="0.8" stop-color="#e6eaf5"/><stop offset="0.86" stop-color="#b9c2d9"/><stop offset="1" stop-color="#9aa5c2"/></linearGradient></defs>
<rect width="46.3" height="46.2" fill="url(#l5)"/>
<path d="M26 4 C34 8 40 6 46.3 12 V2 Z" fill="#f4f6fb" opacity="0.8"/><path d="M0 24 C6 20 10 24 14 22 V30 H0 Z" fill="#f8f9fc" opacity="0.8"/><path d="M32 26 C38 22 42 24 46.3 20 V30 H32 Z" fill="#f8f9fc" opacity="0.7"/>
<path d="M0 40 C6 36.5 12 39 18 37.6 C26 36 32 39 38 37.4 C42 36.4 44 37 46.3 38 V46.2 H0 Z" fill="#c3cbe0"/><path d="M0 43.4 C10 41 20 43 30 42 C38 41 42 42 46.3 43 V46.2 H0 Z" fill="#8f9bbb"/><use href="#person" transform="translate(1.0,8.1) scale(0.118)"/></svg></div>
<div class="th" style="left:742.7px;top:336.0px;height:46.2px;"><svg width="46.3" height="46.2" viewBox="0 0 46.3 46.2"><defs><linearGradient id="l6" x1="0" y1="0" x2="0" y2="1"><stop offset="0" stop-color="#2b7ad6"/><stop offset="0.3" stop-color="#4f97e2"/><stop offset="0.42" stop-color="#9ec6ee"/></linearGradient><filter id="cb2" x="-20%" y="-20%" width="140%" height="140%"><feGaussianBlur stdDeviation="0.6"/></filter></defs>
<rect width="46.3" height="46.2" fill="url(#l6)"/>
<g filter="url(#cb2)" fill="#fff"><ellipse cx="6" cy="16" rx="6" ry="3"/><ellipse cx="16" cy="15" rx="5" ry="3.4"/><ellipse cx="34" cy="15" rx="6" ry="3.4"/><ellipse cx="42" cy="17" rx="5" ry="2.4"/><ellipse cx="24" cy="18" rx="6" ry="1.6"/></g>
<rect y="20" width="46.3" height="10" fill="#2c6cab"/><rect y="19.6" width="46.3" height="1.4" fill="#5b86b5"/>
<path d="M0 26 C6 24 12 25 16 28 L14 33 H0 Z" fill="#4e8a5a"/><path d="M0 30 H46.3 V33 H0 Z" fill="#5f9468" opacity="0.8"/>
<path d="M0 33.4 L46.3 31.4 V46.2 H0 Z" fill="#b9b9b9"/><path d="M0 44 L14 36.4 L16 37 L4 46.2 H0 Z" fill="#f1f1f1"/><path d="M0 36 L10 34.4" stroke="#e9e9e9" stroke-width="0.9"/><path d="M26 46.2 L30 33" stroke="#d8d8d8" stroke-width="0.6"/><use href="#person" transform="translate(1.0,8.1) scale(0.118)"/></svg></div>
<div class="th" style="left:637.0px;top:418.4px;height:28.2px;border-radius:3px 3px 0 0;"><svg width="46.3" height="46.2" viewBox="0 0 46.3 46.2"><rect width="46.3" height="46.2" fill="#c7a071"/><rect width="46.3" height="12" fill="#efebe5"/><path d="M6 0 V11 M12 0 V11 M20 0 V12 M28 0 V12 M34 0 V12 M40 0 V12" stroke="#d9d3ca" stroke-width="1"/>
<path d="M0 8 L22 4 V12 L0 18 Z" fill="#f5f2ee" opacity="0.9"/><path d="M0 18 L24 11 L46.3 14 V20 L0 26 Z" fill="#d9b98c"/><path d="M24 20 L46.3 16 V28 H24 Z" fill="#d3ae80"/><path d="M0 24 L20 20 V29 H0 Z" fill="#b98d5c"/><use href="#person" transform="translate(1.0,8.1) scale(0.118)"/></svg></div>
<div class="th" style="left:689.9px;top:418.4px;height:28.2px;border-radius:3px 3px 0 0;"><svg width="46.3" height="46.2" viewBox="0 0 46.3 46.2"><rect width="46.3" height="46.2" fill="#ecdcbb"/><rect y="0" width="46.3" height="12" fill="#f2e4c6"/>
<rect x="12" y="3" width="5" height="8" fill="#6f5a44"/><path d="M3 8 C3 5 8 5 8 8 V13 H3 Z" fill="#d8d4cc"/><ellipse cx="38" cy="11.6" rx="4" ry="1.8" fill="#e8b74a"/>
<rect y="13.4" width="46.3" height="1.6" fill="#f6efe0"/><rect x="0" y="15" width="14" height="14" fill="#ead9ae"/><rect x="2" y="19" width="7" height="8" fill="#d9c596"/>
<rect x="14" y="15" width="32.3" height="14" fill="#b9773f"/><path d="M30 15 V29" stroke="#8d5528" stroke-width="0.6"/><use href="#person" transform="translate(1.0,8.1) scale(0.118)"/></svg></div>
<div class="th" style="left:742.7px;top:418.4px;height:28.2px;border-radius:3px 3px 0 0;"><svg width="46.3" height="46.2" viewBox="0 0 46.3 46.2"><rect width="46.3" height="46.2" fill="#cdbda6"/><rect width="46.3" height="9" fill="#ebe5dd"/><path d="M0 9 L46.3 7 V10 L0 12 Z" fill="#d9cdbd"/>
<rect x="5" y="17" width="5" height="12" fill="#5a4636"/><rect x="12" y="14" width="6" height="15" fill="#b8a890"/><rect x="38" y="10" width="8.3" height="19" fill="#b9a88c"/>
<path d="M37.6 0 V14" stroke="#8a8072" stroke-width="0.4"/><circle cx="37.6" cy="15.4" r="1.7" fill="#fffdf6"/><rect y="26" width="46.3" height="3" fill="#b7a58b"/><use href="#person" transform="translate(1.0,8.1) scale(0.118)"/></svg><div class="svip">SVIP</div></div>
<div class="abs" style="left:638.4px;top:457.6px;width:72.4px;height:19px;border:1px solid #505050;border-radius:9.5px"></div>
<div class="t" style="left:674.6px;top:467.2px;font-size:8px;color:#bdbdbd;font-weight:700">上传我的背景</div>
<div class="abs" style="left:716px;top:457.6px;width:72.4px;height:19px;border:1px solid #505050;border-radius:9.5px"></div>
<div class="t" style="left:752.2px;top:467.2px;font-size:8px;color:#bdbdbd;font-weight:700">移除背景</div>

<div class="pill2" style="left:58px;top:460px;width:74px"></div>
<svg style="left:74.4px;top:464.8px" width="10" height="10" viewBox="0 0 10 10"><path d="M2.6 3 V1.8 Q2.6 1 3.4 1 H5 L5.8 1.9 H8.4 Q9.2 1.9 9.2 2.7 V6" fill="none" stroke="#fff" stroke-width="1.1" stroke-linejoin="round"/><rect x="0.8" y="3.4" width="6.8" height="5.4" rx="0.9" fill="none" stroke="#fff" stroke-width="1.1"/></svg>
<div class="tl b" style="left:86.1px;top:470px;font-size:8px">批量抠图</div>
<div class="pill2" style="left:137px;top:460px;width:74px"></div>
<svg style="left:152.8px;top:464.8px" width="10" height="10" viewBox="0 0 10 10"><path d="M2.6 0.6 V7.2 H9.4 M0.6 2.6 H7.4 V9.4" fill="none" stroke="#fff" stroke-width="1.2" stroke-linejoin="round" stroke-linecap="round"/></svg>
<div class="tl b" style="left:164.5px;top:470px;font-size:8px">形状裁剪</div>
<!-- zoom pill -->
<div class="abs" style="left:576px;top:450px;width:39px;height:19px;border-radius:9.5px;background:#242424"></div>
<div class="t" style="left:595.3px;top:459px;font-size:8.6px;color:#cdcdcd">48%</div>

<div class="edge"></div>

</div>
</div>
</body>
</html>
